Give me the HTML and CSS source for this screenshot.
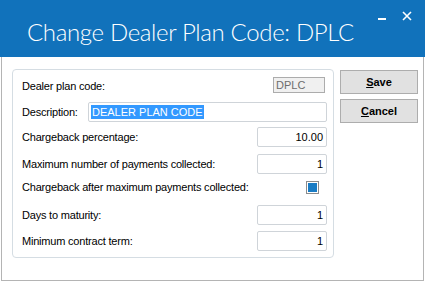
FILE: index.html
```html
<!DOCTYPE html>
<html>
<head>
<meta charset="utf-8">
<link rel="stylesheet" href="styles.css">
</head>
<body>
<div class="titlebar">
  <h1 class="title">Change Dealer Plan Code: DPLC</h1>
  <div class="winctl">
    <svg class="ctl-min" width="8" height="10" viewBox="0 0 8 10"><rect x="0" y="7" width="8" height="2" fill="#fff"/></svg>
    <svg class="ctl-close" width="10" height="10" viewBox="0 0 10 10"><path d="M1 1 L9 9 M9 1 L1 9" stroke="#fff" stroke-width="1.6" fill="none"/></svg>
  </div>
</div>
<div class="frame">
  <div class="group">
    <div class="row row-code"><span class="label">Dealer plan code:</span><span class="field field-code">DPLC</span></div>
    <div class="row"><span class="label label-desc">Description:</span><span class="field field-desc"><span class="sel">DEALER PLAN CODE</span></span></div>
    <div class="row"><span class="label">Chargeback percentage:</span><span class="field field-num">10.00</span></div>
    <div class="row row-gap7"><span class="label">Maximum number of payments collected:</span><span class="field field-num">1</span></div>
    <div class="row row-gap3"><span class="label">Chargeback after maximum payments collected:</span><span class="check"><span class="check-fill"></span></span></div>
    <div class="row row-gap8"><span class="label">Days to maturity:</span><span class="field field-num">1</span></div>
    <div class="row row-gap6"><span class="label">Minimum contract term:</span><span class="field field-num">1</span></div>
  </div>
  <div class="buttons">
    <div class="btn"><span class="u">S</span>ave</div>
    <div class="btn"><span class="u">C</span>ancel</div>
  </div>
</div>
</body>
</html>
```
FILE: styles.css
```css
html, body {
  margin: 0;
  padding: 0;
  background: #ffffff;
}
body {
  width: 425px;
  height: 283px;
  overflow: hidden;
  font-family: "Liberation Sans", Arial, sans-serif;
  font-size: 11px;
  color: #000;
}
.titlebar {
  height: 57px;
  background: #1172bb;
  display: flex;
  align-items: flex-start;
}
.title {
  margin: 0;
  padding: 20px 0 0 27px;
  font-family: "Lato", "Open Sans", sans-serif;
  font-weight: 300;
  font-size: 24px;
  line-height: 24px;
  letter-spacing: -0.35px;
  color: #ffffff;
  white-space: nowrap;
}
.winctl {
  margin-left: auto;
  padding: 11px 13px 0 0;
  display: flex;
  align-items: flex-start;
  gap: 16px;
}
.winctl svg { display: block; }
.frame {
  margin: 0 1px;
  height: 211px;
  border: 1px solid #b4b4b4;
  border-top: none;
  display: flex;
  align-items: flex-start;
  padding: 12px 0 0 10px;
  box-sizing: content-box;
}
.group {
  border: 1px solid #d5dde3;
  border-radius: 4px;
  padding: 7px 6px 0 9px;
  box-sizing: border-box;
  width: 322px;
  height: 189px;
  display: flex;
  flex-direction: column;
}
.row {
  height: 20px;
  display: flex;
  align-items: center;
  margin-top: 5px;
  letter-spacing: -0.2px;
}
.row-code {
  height: 16px;
  margin-top: 0;
  margin-bottom: 4px;
}
.row-code .label { padding-top: 2px; }
.row-gap7 { margin-top: 7px; }
.row-gap3 { margin-top: 3px; }
.row-gap8 { margin-top: 8px; }
.row-gap6 { margin-top: 6px; }
.label {
  flex: 1;
  white-space: nowrap;
}
.label-desc {
  flex: 0 0 66px;
}
.field {
  box-sizing: border-box;
  height: 20px;
  border: 1px solid #cfd4d9;
  border-radius: 2px;
  background: #fff;
  display: flex;
  align-items: center;
  white-space: nowrap;
  letter-spacing: 0;
}
.field-num {
  width: 70px;
  justify-content: flex-end;
  padding-right: 3px;
}
.field-code {
  width: 52px;
  height: 16px;
  margin-right: 2px;
  background: #f0f0f0;
  border-color: #acacac;
  border-radius: 0;
  color: #6d6d6d;
  padding-left: 2px;
}
.field-desc {
  width: 239px;
  padding-left: 2px;
}
.sel {
  background: #3399ff;
  color: #ffffff;
  padding: 1px 1px;
  line-height: 12px;
}
.check {
  box-sizing: border-box;
  width: 13px;
  height: 13px;
  border: 1px solid #8c8c8c;
  padding: 1px;
  margin-right: 8px;
  background: #fff;
}
.check-fill {
  display: block;
  width: 9px;
  height: 9px;
  background: #1a7cc4;
}
.buttons {
  margin: 1px 0 0 6px;
  display: flex;
  flex-direction: column;
  gap: 5px;
}
.btn {
  box-sizing: border-box;
  width: 78px;
  height: 24px;
  background: #e1e1e1;
  border: 1px solid #adadad;
  display: flex;
  align-items: center;
  justify-content: center;
  font-weight: bold;
  font-size: 11px;
}
.u { text-decoration: underline; }
```
